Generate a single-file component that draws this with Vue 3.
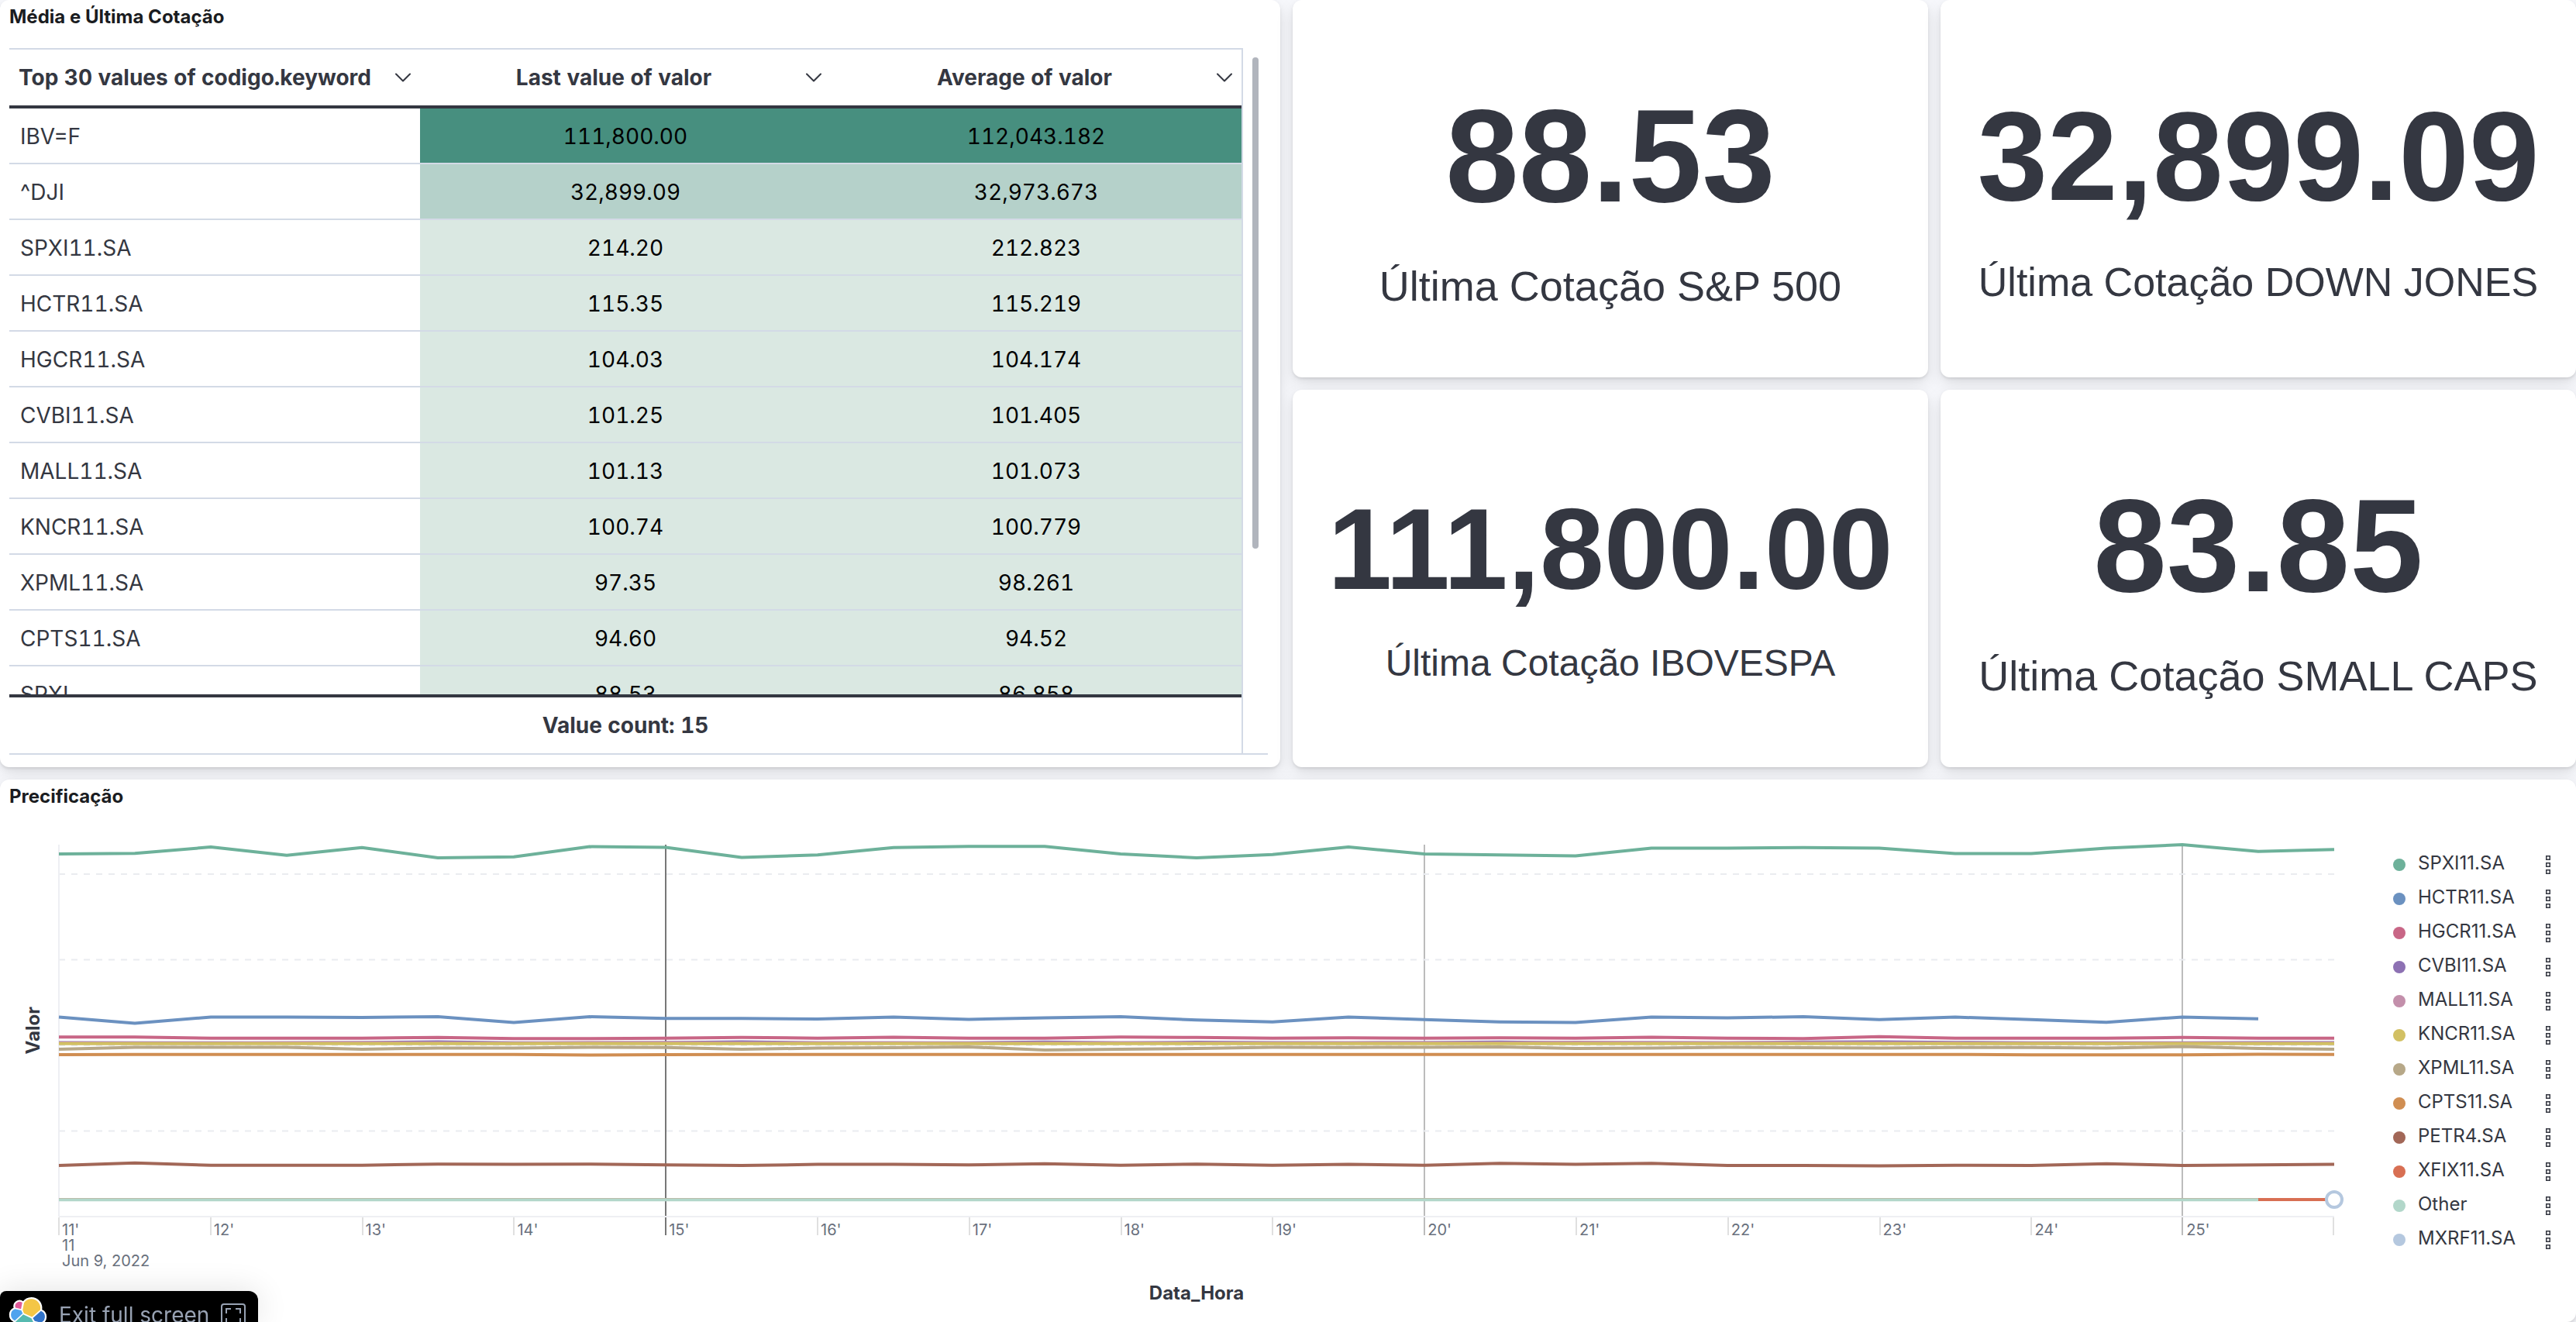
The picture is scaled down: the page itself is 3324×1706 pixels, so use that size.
<script setup>
const rows = [
  ['IBV=F', '111,800.00', '112,043.182', 'high'],
  ['^DJI', '32,899.09', '32,973.673', 'mid'],
  ['SPXI11.SA', '214.20', '212.823', 'low'],
  ['HCTR11.SA', '115.35', '115.219', 'low'],
  ['HGCR11.SA', '104.03', '104.174', 'low'],
  ['CVBI11.SA', '101.25', '101.405', 'low'],
  ['MALL11.SA', '101.13', '101.073', 'low'],
  ['KNCR11.SA', '100.74', '100.779', 'low'],
  ['XPML11.SA', '97.35', '98.261', 'low'],
  ['CPTS11.SA', '94.60', '94.52', 'low'],
  ['SPXL', '88.53', '86.858', 'low'],
]

const columns = ['Top 30 values of codigo.keyword', 'Last value of valor', 'Average of valor']

const metrics = [
  { value: '88.53', label: 'Última Cotação S&P 500', size: 'xl' },
  { value: '32,899.09', label: 'Última Cotação DOWN JONES', size: 'l' },
  { value: '111,800.00', label: 'Última Cotação IBOVESPA', size: 'm' },
  { value: '83.85', label: 'Última Cotação SMALL CAPS', size: 'xl' },
]

const flat = (value, count = 31) => Array(count).fill(value)

// One reading every 30 seconds, from minute 11 to minute 26
const series = [
  { name: 'SPXI11.SA', color: '#6db19a', values: [211.8, 212.1, 215.8, 211, 215.5, 209.5, 210.1, 216, 215.6, 209.7, 211.2, 215.5, 216.2, 216.2, 211.8, 209.5, 211.4, 215.8, 211.8, 211.2, 210.6, 215.1, 215.1, 215.5, 215.1, 212, 212, 215.1, 217.2, 213.2, 214.4] },
  { name: 'HCTR11.SA', color: '#6b91c0', values: [116.5, 112.9, 116.5, 116.5, 116.3, 116.7, 113.3, 116.7, 115.7, 115.7, 115.4, 116.5, 115.2, 116.1, 116.7, 114.8, 113.7, 116.5, 115, 113.7, 113.3, 116.5, 116.1, 116.7, 115, 116.5, 115, 113.5, 116.5, 115.5] },
  { name: 'HGCR11.SA', color: '#c86686', values: [104.9, 104.9, 104.2, 104.2, 104.2, 104.6, 104, 104, 104.2, 104.6, 104.2, 104.7, 104.2, 104.2, 104.9, 104.6, 104.2, 104.4, 104.2, 104.4, 104.2, 104.7, 104.2, 104, 105.1, 104.2, 104.2, 104.2, 104.6, 104.2, 104.2] },
  { name: 'CVBI11.SA', color: '#8d71b3', values: [101.6, 101.5, 101.5, 101.5, 101.6, 102, 101.5, 101.5, 101.6, 102, 101.5, 101.5, 101.5, 101.9, 101.5, 101.8, 101.6, 101.5, 101.6, 101.9, 101.5, 101.6, 101.5, 101.9, 102, 101.7, 101.5, 101.5, 101.5, 101.6, 101.6] },
  { name: 'MALL11.SA', color: '#c38fab', values: [101.3, 101.2, 101.2, 101.5, 101.6, 101.4, 101.2, 101.6, 101.6, 101.4, 101.5, 101.5, 101.2, 101.4, 101.5, 101.3, 101.4, 101.5, 101.5, 101.4, 101.8, 101.6, 101.5, 101.6, 101.4, 101.3, 101.2, 101.2, 101.2, 101.2, 101.2] },
  { name: 'KNCR11.SA', color: '#d2c063', values: flat(101) },
  { name: 'XPML11.SA', color: '#b7a888', values: [97.7, 98.9, 98.9, 98.9, 97.8, 98.4, 98.4, 98.9, 98.8, 97.7, 98.4, 98.6, 99.1, 97.3, 97.7, 98.2, 98.9, 98.8, 98.9, 99.1, 98.2, 98.4, 98.9, 98.6, 98.4, 98.8, 98.8, 98.4, 99.3, 98.2, 97.7] },
  { name: 'CPTS11.SA', color: '#d08e52', values: [94.6, 94.7, 94.7, 94.7, 94.7, 94.7, 94.7, 94.3, 94.6, ...flat(94.7, 17), 94.5, 94.5, 94.5, 94.8, 94.7] },
  { name: 'PETR4.SA', color: '#a26757', values: [29.8, 31.3, 30, 30, 30, 30.7, 30.5, 30.7, 30.2, 29.8, 30.5, 30.5, 30.2, 30.9, 30, 30.7, 30, 30.5, 30, 31.1, 30.5, 31.1, 29.8, 29.8, 29.6, 30, 29.8, 30.9, 29.8, 30.2, 30.5] },
  { name: 'XFIX11.SA', color: '#d86f53', values: flat(10) },
  { name: 'Other', color: '#b2d7ca', values: flat(9.8, 30) },
  { name: 'MXRF11.SA', color: '#b5c8df', values: [] },
]

const WIDTH = 2936
const HEIGHT = 480
const xAt = (i) => Math.round((i * WIDTH) / 30)
const yAt = (v) => (HEIGHT - v * 2.21).toFixed(1)
const points = (values) => values.map((v, i) => `${xAt(i)},${yAt(v)}`).join(' ')

const gridLines = [200, 150, 100, 50].map(yAt)
const markers = [
  { x: xAt(8), color: '#777777' },
  { x: xAt(18), color: '#bcbcbc' },
  { x: xAt(28), color: '#bcbcbc' },
]
const ticks = Array.from({ length: 15 }, (_, i) => `${i + 11}'`)
</script>

<template>
  <main class="dashboard">
    <div class="top">
      <section class="panel table-panel">
        <h2 class="panel-title">Média e Última Cotação</h2>
        <div class="grid">
          <div class="grid-body">
            <table>
              <thead>
                <tr>
                  <th v-for="c in columns" :key="c" scope="col">
                    <button type="button" class="head-btn">
                      <span class="head-text">{{ c }}</span>
                      <svg class="chevron" viewBox="0 0 24 24" aria-hidden="true">
                        <path d="M3 7.500L12 16.500L21 7.500" />
                      </svg>
                    </button>
                  </th>
                </tr>
              </thead>
              <tbody>
                <tr v-for="r in rows" :key="r[0]">
                  <td>{{ r[0] }}</td>
                  <td class="num" :class="r[3]">{{ r[1] }}</td>
                  <td class="num" :class="r[3]">{{ r[2] }}</td>
                </tr>
              </tbody>
              <tfoot>
                <tr>
                  <td></td>
                  <td class="num">Value count: 15</td>
                  <td></td>
                </tr>
              </tfoot>
            </table>
          </div>
          <div class="scrollbar"><div class="thumb"></div></div>
        </div>
      </section>

      <section v-for="m in metrics" :key="m.label" class="panel metric" :class="m.size">
        <div class="metric-value">{{ m.value }}</div>
        <div class="metric-label">{{ m.label }}</div>
      </section>
    </div>

    <section class="panel chart-panel">
      <h2 class="panel-title">Precificação</h2>
      <div class="chart">
        <div class="y-title"><span>Valor</span></div>
        <div class="plot">
          <div class="canvas">
            <svg class="lines" :viewBox="`0 0 ${WIDTH} ${HEIGHT}`" preserveAspectRatio="none">
              <line v-for="m in markers" :key="m.x" :x1="m.x" :x2="m.x" y1="0" y2="504" :stroke="m.color" class="marker" />
              <line v-for="y in gridLines" :key="y" x1="0" :x2="WIDTH" :y1="y" :y2="y" class="grid-line" />
              <line x1="0" x2="0" y1="0" :y2="HEIGHT" class="axis" />
              <line x1="0" :x2="WIDTH" :y1="HEIGHT" :y2="HEIGHT" class="axis" />
              <polyline v-for="s in series" :key="s.name" :points="points(s.values)" :stroke="s.color" class="series" />
            </svg>
            <span class="point"></span>
          </div>
          <div class="ticks">
            <div v-for="(t, i) in ticks" :key="t" class="tick" :class="{ marked: i % 5 === 4 }">
              {{ t }}
              <template v-if="i === 0"><br />11<br />Jun 9, 2022</template>
            </div>
          </div>
          <div class="x-title">Data_Hora</div>
        </div>
        <ul class="legend">
          <li v-for="s in series" :key="s.name">
            <span class="dot" :style="{ background: s.color }"></span>
            <span class="name">{{ s.name }}</span>
            <button type="button" class="more" :aria-label="`Options for ${s.name}`">
              <svg viewBox="0 0 6 24" aria-hidden="true">
                <rect x="0.750" y="0.750" width="4.500" height="4.500" />
                <rect x="0.750" y="9.750" width="4.500" height="4.500" />
                <rect x="0.750" y="18.750" width="4.500" height="4.500" />
              </svg>
            </button>
          </li>
        </ul>
      </div>
    </section>

    <button type="button" class="exit">
      <svg class="logo" viewBox="0 0 32 32" aria-hidden="true">
        <g stroke="#fff" stroke-width="3" stroke-linejoin="round" fill="#fff">
          <path d="M12.580 13.787l7.002 3.211 7.066-6.213a7.849 7.849 0 0 0 .152-1.557c0-4.287-3.474-7.775-7.744-7.775a7.733 7.733 0 0 0-6.388 3.374l-1.177 6.125z" />
          <path d="M5.333 21.228a7.964 7.964 0 0 0-.150 1.577c0 4.300 3.490 7.800 7.780 7.800 2.580 0 4.990-1.280 6.430-3.420l1.166-6.100-1.556-2.986-7.030-3.215z" />
          <path d="M5.288 9.067l4.800 1.137L11.139 4.730a3.785 3.785 0 0 0-5.850 4.338z" />
          <path d="M4.872 10.214a5.297 5.297 0 0 0-3.488 4.981c0 2.199 1.358 4.155 3.397 4.935l6.733-6.108-1.236-2.652z" />
          <path d="M21.848 20.563l5.280 1.238a5.308 5.308 0 0 0 3.488-4.981 5.290 5.290 0 0 0-3.402-4.930l-6.905 6.074z" />
        </g>
        <path fill="#f4c646" d="M12.580 13.787l7.002 3.211 7.066-6.213a7.849 7.849 0 0 0 .152-1.557c0-4.287-3.474-7.775-7.744-7.775a7.733 7.733 0 0 0-6.388 3.374l-1.177 6.125z" />
        <path fill="#56bab0" d="M5.333 21.228a7.964 7.964 0 0 0-.150 1.577c0 4.300 3.490 7.800 7.780 7.800 2.580 0 4.990-1.280 6.430-3.420l1.166-6.100-1.556-2.986-7.030-3.215z" />
        <path fill="#e05a99" d="M5.288 9.067l4.800 1.137L11.139 4.730a3.785 3.785 0 0 0-5.850 4.338z" />
        <path fill="#4fa3ee" d="M4.872 10.214a5.297 5.297 0 0 0-3.488 4.981c0 2.199 1.358 4.155 3.397 4.935l6.733-6.108-1.236-2.652z" />
        <path fill="#3173c9" d="M21.848 20.563l5.280 1.238a5.308 5.308 0 0 0 3.488-4.981 5.290 5.290 0 0 0-3.402-4.930l-6.905 6.074z" />
      </svg>
      <span class="exit-text">Exit full screen</span>
      <svg class="key" viewBox="0 0 32 32" aria-hidden="true">
        <rect x="1" y="1" width="30" height="30" rx="3" />
        <path d="M7 13V7H13M19 7H25V13M25 19V25H19M13 25H7V19" />
      </svg>
    </button>
  </main>
</template>

<style>
body {
  margin: 0;
  background: #f7f8fc;
}
</style>

<style scoped>
.dashboard {
  display: flex;
  flex-direction: column;
  gap: 16px;
  min-height: 100vh;
  box-sizing: border-box;
  overflow: hidden;
  font-family: Inter, "Liberation Sans", sans-serif;
  color: #343741;
}
button {
  font: inherit;
  color: inherit;
  border: 0;
  background: none;
  padding: 0;
  cursor: pointer;
}
.top {
  display: grid;
  grid-template-columns: 1652fr 820fr 820fr;
  grid-template-rows: 1fr 1fr;
  gap: 16px;
}
.panel {
  background: #fff;
  border-radius: 12px;
  min-width: 0;
  box-shadow: 0 2px 3px rgba(0, 0, 0, 0.07), 0 4px 8px rgba(0, 0, 0, 0.05),
    0 9px 24px rgba(0, 0, 0, 0.09);
}
.panel-title {
  margin: 0;
  padding-left: 12px;
  font-size: 24px;
  line-height: 44px;
  font-weight: 700;
  color: #1a1c21;
}

/* Table */
.table-panel {
  grid-row: span 2;
  padding-bottom: 16px;
}
.grid {
  display: flex;
  margin: 18px 16px 0 12px;
  border-bottom: 2px solid #d3dae6;
}
.grid-body {
  flex: 1;
  height: 910px;
  box-sizing: border-box;
  overflow: hidden;
  border-top: 2px solid #d3dae6;
  border-right: 2px solid #d3dae6;
}
table {
  width: 100%;
  table-layout: fixed;
  border-collapse: separate;
  border-spacing: 0;
  font-size: 28px;
  line-height: 40px;
  font-feature-settings: "tnum" 1;
}
th,
td {
  text-align: left;
}
thead th {
  position: sticky;
  top: 0;
  z-index: 1;
  padding: 16px 10px 16px 12px;
  background: #fff;
  border-bottom: 4px solid #343741;
}
tbody td {
  padding: 16px 14px 14px;
  border-bottom: 2px solid #d3dae6;
}
tfoot td {
  position: sticky;
  bottom: 0;
  padding: 16px 12px;
  background: #fff;
  border-top: 4px solid #343741;
  font-weight: 700;
}
.head-btn {
  display: flex;
  align-items: center;
  gap: 8px;
  width: 100%;
  font-weight: 700;
}
.head-text {
  flex: 1;
  white-space: nowrap;
}
th:first-child .head-text {
  text-align: left;
}
.chevron {
  width: 24px;
  height: 24px;
  fill: none;
  stroke: #343741;
  stroke-width: 2;
  stroke-linecap: round;
  stroke-linejoin: round;
}
.num {
  text-align: center;
}
tbody .num {
  color: #000;
}
.high {
  background: #478f7f;
}
.mid {
  background: #b5d1ca;
}
.low {
  background: #dae8e2;
}
.scrollbar {
  width: 32px;
  display: flex;
  justify-content: center;
  padding-top: 12px;
  box-sizing: border-box;
}
.thumb {
  width: 8px;
  height: 634px;
  border-radius: 4px;
  background: #b1b5bd;
}

/* Metrics */
.metric {
  display: flex;
  flex-direction: column;
  align-items: center;
  justify-content: center;
  padding-bottom: 4px;
  font-family: "Liberation Sans", Arial, sans-serif;
  line-height: 1.5;
  white-space: nowrap;
}
.metric-value {
  font-weight: 700;
}
.xl .metric-value {
  font-size: 170px;
}
.xl .metric-label {
  font-size: 54px;
}
.l .metric-value {
  font-size: 163px;
}
.l .metric-label {
  font-size: 52px;
}
.m .metric-value {
  font-size: 149px;
}
.m .metric-label {
  font-size: 48px;
}

/* Chart */
.chart-panel {
  flex: 1;
}
.chart {
  display: flex;
  padding-top: 40px;
}
.y-title {
  flex: 0 0 76px;
  height: 480px;
  box-sizing: border-box;
  padding-right: 18px;
  display: flex;
  align-items: center;
  justify-content: flex-end;
  font-size: 24px;
  line-height: 30px;
  font-weight: 700;
}
.y-title span {
  writing-mode: vertical-rl;
  transform: rotate(180deg);
}
.plot {
  flex: 1;
  min-width: 0;
}
.canvas {
  position: relative;
  height: 480px;
}
.lines {
  display: block;
  width: 100%;
  height: 100%;
  overflow: visible;
}
.lines * {
  vector-effect: non-scaling-stroke;
}
.series {
  fill: none;
  stroke-width: 4;
  stroke-linejoin: round;
}
.grid-line {
  stroke: #eaecf0;
  stroke-width: 2;
  stroke-dasharray: 8 8;
}
.axis {
  stroke: #eeeff3;
  stroke-width: 2;
}
.marker {
  stroke-width: 2;
}
.point {
  position: absolute;
  right: -12px;
  bottom: 10px;
  width: 16px;
  height: 16px;
  border: 4px solid #b5c8df;
  border-radius: 50%;
  background: #fff;
}
.ticks {
  display: grid;
  grid-template-columns: repeat(15, 1fr);
  margin-left: -1px;
  padding-top: 1px;
  background: linear-gradient(#e0e0e0, #e0e0e0) right top / 2px 24px no-repeat;
}
.tick {
  padding: 6px 0 0 5px;
  font-size: 20px;
  line-height: 20px;
  color: #69707d;
  white-space: nowrap;
  background: linear-gradient(#e0e0e0, #e0e0e0) left top / 2px 23px no-repeat;
}
.tick.marked {
  background: none;
}
.x-title {
  margin-top: 17px;
  text-align: center;
  font-size: 24px;
  line-height: 30px;
  font-weight: 700;
}
.legend {
  flex: 0 0 312px;
  box-sizing: border-box;
  margin: 0;
  padding: 2px 33px 0 76px;
  list-style: none;
  font-size: 24px;
  line-height: 44px;
}
.legend li {
  display: flex;
  align-items: center;
}
.dot {
  width: 16px;
  height: 16px;
  margin-top: 4px;
  border-radius: 50%;
}
.name {
  flex: 1;
  padding-left: 16px;
}
.more {
  display: flex;
  margin-top: 4px;
}
.more svg {
  width: 6px;
  height: 24px;
  fill: none;
  stroke: #343741;
  stroke-width: 1.5;
}

/* Full screen exit */
.exit {
  position: fixed;
  left: 0;
  bottom: 0;
  z-index: 2;
  display: flex;
  align-items: flex-start;
  width: 333px;
  height: 40px;
  padding: 8px 16px 0 12px;
  overflow: hidden;
  border-radius: 8px 12px 0 0;
  background: #000;
  color: #98a2b3;
  font-size: 28px;
  line-height: 46px;
  box-shadow: 0 0 40px rgba(0, 0, 0, 0.12);
}
.logo {
  width: 48px;
  height: 48px;
  flex: none;
  overflow: visible;
}
.exit-text {
  flex: 1;
  padding-left: 16px;
  text-align: left;
  white-space: nowrap;
}
.key {
  width: 32px;
  height: 32px;
  flex: none;
  margin-top: 8px;
  fill: none;
  stroke: #98a2b3;
  stroke-width: 2;
}
</style>
